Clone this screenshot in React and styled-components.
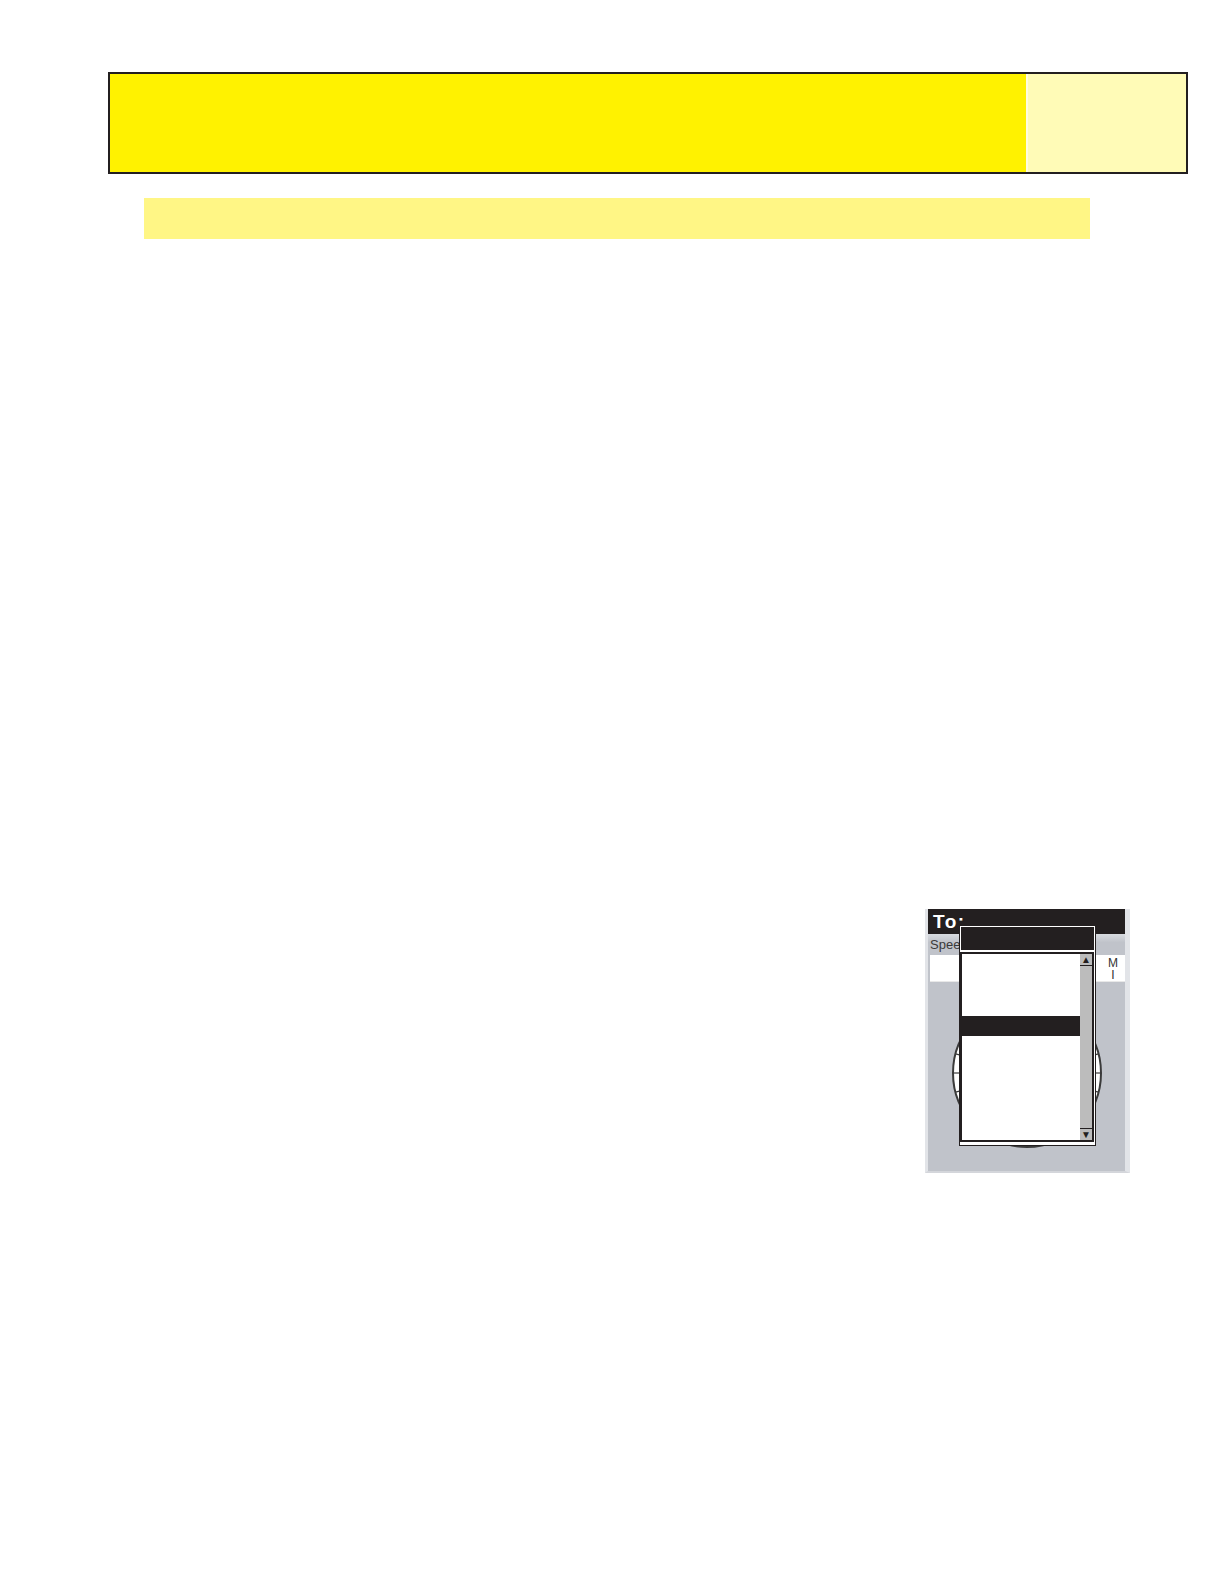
import React from "react";
import styled, { createGlobalStyle } from "styled-components";

const Global = createGlobalStyle`
  html, body { margin: 0; padding: 0; background: #ffffff; }
  body { font-family: "Liberation Sans", Arial, sans-serif; }
  * { box-sizing: border-box; }
`;

const Page = styled.div`
  width: 1224px;
  height: 1584px;
  padding-top: 72px;
  background: #ffffff;
  overflow: hidden;
`;

const Header = styled.header`
  margin-left: 108px;
  width: 1080px;
  height: 102px;
  border: 2px solid #231f20;
  display: flex;
`;

const HeaderMain = styled.div`
  flex: 0 0 918px;
  background: #fff200;
  border-right: 2px solid #fffde0;
`;

const HeaderSide = styled.div`
  flex: 1;
  background: #fffbb7;
`;

const SubBar = styled.div`
  margin: 24px 0 0 144px;
  width: 946px;
  height: 41px;
  background: #fff685;
`;

const Figure = styled.div`
  margin: 670px 0 0 925px;
  width: 205px;
  height: 264px;
  position: relative;
  background: #c0c3ca;
  border-left: 3px solid #e2e4e8;
  border-right: 5px solid #e2e4e8;
  border-bottom: 2px solid #d4d6db;
  display: flex;
  flex-direction: column;
`;

const TitleBar = styled.div`
  height: 25px;
  background: #231f20;
  color: #ffffff;
  font-weight: bold;
  font-size: 19px;
  line-height: 25px;
  padding-left: 5px;
  letter-spacing: 1.5px;
`;

const Label = styled.div`
  height: 21px;
  font-size: 13px;
  line-height: 22px;
  color: #3a3a3a;
  padding-left: 2px;
  background: linear-gradient(#d8dbe0, #c0c3ca 40%);
`;

const InputRow = styled.div`
  height: 27px;
  margin-left: 2px;
  background: #ffffff;
  display: flex;
  justify-content: flex-end;
  border-bottom: 1px solid #e8e8e8;
`;

const UnitText = styled.div`
  width: 24px;
  font-size: 12px;
  line-height: 12px;
  color: #333333;
  text-align: center;
  padding-top: 2px;
`;

const DialArea = styled.div`
  flex: 1;
  display: flex;
  justify-content: center;
  padding-top: 15px;
`;

const Popup = styled.div`
  position: absolute;
  left: 31px;
  top: 16px;
  width: 137px;
  height: 221px;
  background: #ffffff;
  border: 1px solid #231f20;
  padding: 1px 1px 3px 0;
  display: flex;
  flex-direction: column;
  gap: 2px;
`;

const PopupHead = styled.div`
  height: 23px;
  margin-left: 1px;
  background: #231f20;
`;

const List = styled.div`
  flex: 1;
  border: 2px solid #231f20;
  display: flex;
`;

const Items = styled.div`
  flex: 1;
  padding-top: 62px;
`;

const Row = styled.div`
  height: 20px;
  background: ${(p) => (p.$selected ? "#231f20" : "transparent")};
`;

const ScrollBar = styled.div`
  width: 12px;
  background: #bcbcbc;
  display: flex;
  flex-direction: column;
  justify-content: space-between;
`;

const Arrow = styled.div`
  height: 12px;
  display: flex;
  align-items: center;
  justify-content: center;
  font-size: 10px;
  line-height: 10px;
  color: #231f20;
  border-${(p) => (p.$down ? "top" : "bottom")}: 1px solid #231f20;
`;

function Dial() {
  const ticks = [];
  for (let i = 0; i < 24; i++) {
    const a = (i / 24) * Math.PI * 2;
    const x1 = 75 + Math.cos(a) * 74;
    const y1 = 75 + Math.sin(a) * 74;
    const x2 = 75 + Math.cos(a) * 64;
    const y2 = 75 + Math.sin(a) * 64;
    ticks.push(<line key={i} x1={x1} y1={y1} x2={x2} y2={y2} stroke="#3a3a3a" strokeWidth="1.2" />);
  }
  return (
    <svg width="152" height="152" viewBox="-1 -1 152 152">
      <circle cx="75" cy="75" r="74" fill="#ffffff" stroke="#3a3a3a" strokeWidth="2" />
      <circle cx="75" cy="75" r="64" fill="none" stroke="#6a6a6a" strokeWidth="1" />
      {ticks}
    </svg>
  );
}

export default function App() {
  return (
    <Page>
      <Global />
      <Header>
        <HeaderMain />
        <HeaderSide />
      </Header>
      <SubBar />
      <Figure>
        <TitleBar>To:</TitleBar>
        <Label>Speed</Label>
        <InputRow>
          <UnitText>
            M
            <br />I
          </UnitText>
        </InputRow>
        <DialArea>
          <Dial />
        </DialArea>
        <Popup>
          <PopupHead />
          <List>
            <Items>
              <Row $selected />
            </Items>
            <ScrollBar>
              <Arrow>▲</Arrow>
              <Arrow $down>▼</Arrow>
            </ScrollBar>
          </List>
        </Popup>
      </Figure>
    </Page>
  );
}
